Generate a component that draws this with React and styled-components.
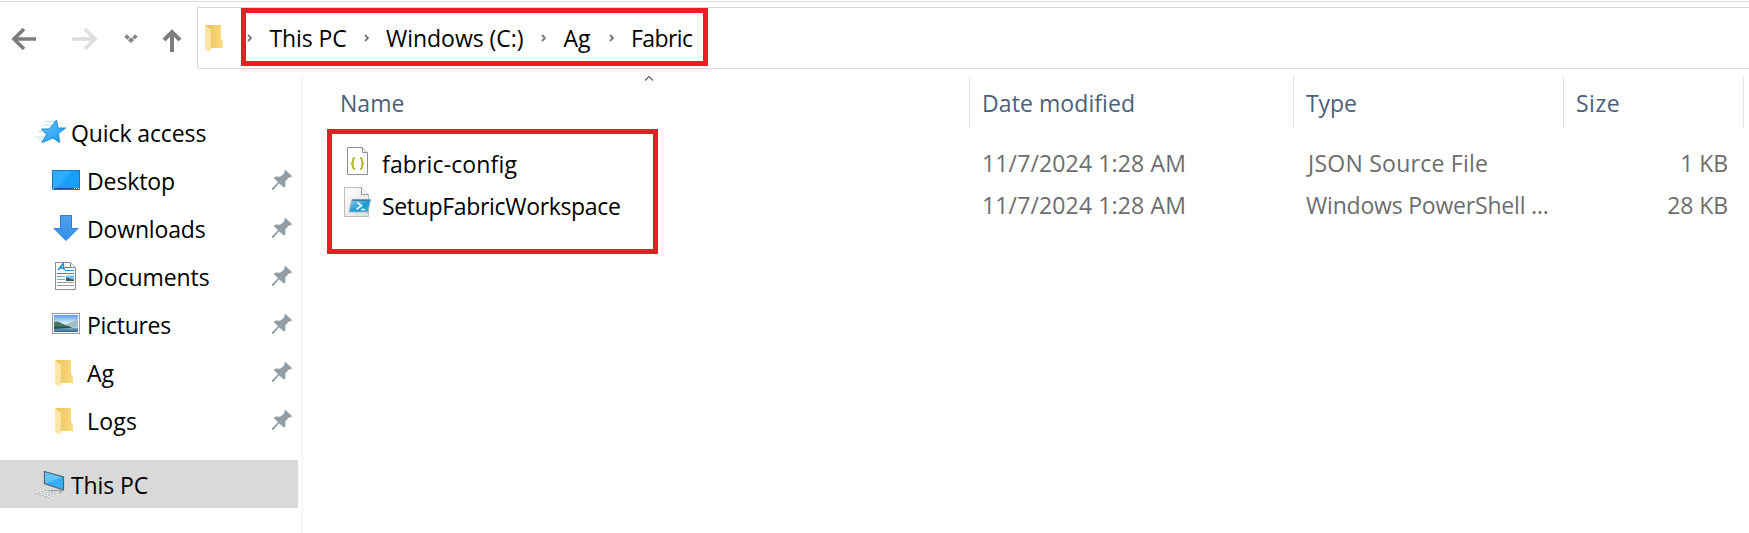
import React from "react";
import styled, { createGlobalStyle, css } from "styled-components";

const GlobalStyle = createGlobalStyle`
  *, *::before, *::after { box-sizing: border-box; }
  body {
    margin: 0;
    background: #fff;
    color: #000;
    font-family: "Open Sans", "Noto Sans", sans-serif;
    font-size: 23px;
    line-height: 30px;
    overflow: hidden;
  }
  svg { display: block; }
`;

const Window = styled.div`
  display: flex;
  flex-direction: column;
  width: 1749px;
  height: 533px;
  overflow: hidden;
  background: #fff;
`;

const NavigationBar = styled.header`
  display: flex;
  flex: none;
  height: 69px;
  margin-top: 1px;
  border-top: 1px solid #dcdcdc;
`;

const NavButtons = styled.nav`
  display: flex;
  width: 197px;
  height: 67px;
`;

const NavButton = styled.button`
  flex: none;
  width: ${(p) => p.$width}px;
  height: 67px;
  padding: 0;
  border: 0;
  background: none;
`;

const AddressBar = styled.div`
  display: flex;
  flex: 1;
  height: 62px;
  margin-top: 5px;
  border: 1px solid #d9d9d9;
  border-right: 0;
`;

const AddressIcon = styled.div`
  width: 43px;
  padding: 14px 0 0 5px;
`;

const Breadcrumbs = styled.div`
  display: flex;
  align-items: center;
  width: 467px;
  height: 58px;
  padding: 2px 0 0 1px;
  border: 5px solid #ed1c24;
`;

const Crumb = styled.div`
  display: flex;
  align-items: center;
  width: ${(p) => p.$width}px;
`;

const Text = styled.span`
  white-space: nowrap;
  letter-spacing: ${(p) => p.$track || 0}px;
`;

const CrumbText = styled(Text)`
  padding-left: ${(p) => p.$indent}px;
`;

const Body = styled.div`
  display: flex;
  flex: 1;
  min-height: 0;
`;

const Sidebar = styled.aside`
  width: 303px;
  margin-top: 6px;
  padding-top: 32px;
  border-right: 2px solid #f7f7f7;
`;

const SidebarItem = styled.div`
  display: flex;
  align-items: center;
  width: 298px;
  height: 48px;
  padding-left: 34px;
  ${(p) => p.$child && css`padding-left: 50px;`}
  ${(p) => p.$selected && css`
    margin-top: 16px;
    background: #d9d9d9;
  `}
`;

const SidebarIcon = styled.div`
  flex: none;
  ${(p) => p.$folder && css`
    width: 31px;
    padding: 4px 0 0 3px;
  `}
`;

const SidebarText = styled(Text)`
  flex: 1;
  padding: 2px 0 0 5px;
  ${(p) => p.$child && css`padding-left: 6px;`}
`;

const PinSlot = styled.div`
  width: 27px;
`;

const FileList = styled.main`
  flex: 1;
  padding-top: 6px;
`;

const columns = css`
  display: grid;
  grid-template-columns: 667px 324px 270px 180px;
`;

const HeaderRow = styled.div`
  ${columns}
  height: 52px;
  color: #4c607a;
`;

const HeaderCell = styled.div`
  position: relative;
  padding: 12px 0 0 12px;
  border-right: 1px solid #e5e5e5;
  ${(p) => p.$first && css`padding-left: 37px;`}
`;

const SortMark = styled.div`
  position: absolute;
  top: -1px;
  left: 341px;
`;

const FileTable = styled.div`
  ${columns}
  margin-top: 1px;
`;

const HighlightedNames = styled.div`
  width: 331px;
  height: 125px;
  margin-left: 24px;
  padding-top: 7px;
  border: 5px solid #ed1c24;
`;

const FileName = styled.div`
  display: flex;
  align-items: center;
  height: 42px;
  padding-left: 11px;
`;

const FileText = styled(Text)`
  padding: 3px 0 0 8px;
`;

const DetailColumn = styled.div`
  padding: 12px 0 0 12px;
  color: #6d6d6d;
  ${(p) => p.$right && css`
    padding-right: 16px;
    text-align: right;
  `}
`;

const Detail = styled.div`
  height: 42px;
  padding-top: 7px;
  padding-left: ${(p) => p.$indent || 0}px;
`;

const FolderIcon = ({ id }) => (
  <svg width="31" height="34" viewBox="0 0 31 34">
    <defs>
      <linearGradient id={id} x1="0" y1="0" x2="1" y2="0">
        <stop offset="0" stopColor="#e9bf58" />
        <stop offset="1" stopColor="#fcdd83" />
      </linearGradient>
    </defs>
    <path d="M2 3h16v14l2 2v7H5z" fill={`url(#${id})`} />
    <path d="M2 3l6 5v19l-1 3-5-3z" fill="#ffe5a3" />
    <path d="M8 9v17" stroke="#f3d381" strokeWidth=".7" />
  </svg>
);

const BackIcon = () => (
  <svg width="54" height="67">
    <path d="M36 37H14M24 27L14 37l10 10" fill="none" stroke="#7d7d7d" strokeWidth="3.7" />
  </svg>
);

const ForwardIcon = () => (
  <svg width="64" height="67">
    <path d="M18 37h22M31 27l10 10-10 10" fill="none" stroke="#dedede" strokeWidth="3.5" />
  </svg>
);

const RecentIcon = () => (
  <svg width="30" height="67">
    <path d="M7.5 33.5l5.500 5 5.500-5" fill="none" stroke="#858585" strokeWidth="3.6" strokeDasharray="4.200 .8 5 .8 4.200" />
  </svg>
);

const UpIcon = () => (
  <svg width="49" height="67">
    <path d="M24 50V30M16 38l8-8 8 8" fill="none" stroke="#7d7d7d" strokeWidth="4" />
  </svg>
);

const CrumbArrow = () => (
  <svg width="6" height="10" viewBox="0 0 6 10">
    <path d="M1 2l3 3-3 3" fill="none" stroke="#777" strokeWidth="1.8" />
  </svg>
);

const StarIcon = () => (
  <svg width="32" height="34" viewBox="0 0 32 34">
    <defs>
      <linearGradient id="star" x1="0" y1="0" x2="1" y2="1">
        <stop offset="0" stopColor="#6cc8ff" />
        <stop offset="1" stopColor="#1295ee" />
      </linearGradient>
    </defs>
    <path d="M11 6.500h10M9 10h9M4 16.500h9M2 22h8M5 25h4" stroke="#b5dbf4" strokeWidth=".9" />
    <path d="M22.500 5l1.500 8h7.500l-7 5.500 1 9-6.500-4.500-11 4.500 4.500-8-5-5.500h8z" fill="url(#star)" stroke="#188bd3" strokeWidth="1" />
  </svg>
);

const DesktopIcon = () => (
  <svg width="31" height="34" viewBox="0 0 31 34">
    <rect x="2.500" y="7.500" width="27" height="19" fill="#16a0fb" stroke="#1479bd" />
    <path d="M3 8h19L7 25H3z" fill="#38b0ff" opacity=".75" />
    <path d="M3 25.500h26" stroke="#075a91" strokeWidth="1.200" />
    <path d="M3 25.500h1M24 25.500h1M26 25.500h1M28 25.500h1" stroke="#fff" />
  </svg>
);

const DownloadIcon = () => (
  <svg width="31" height="34" viewBox="0 0 31 34">
    <defs>
      <linearGradient id="down" x1="0" y1="0" x2="0" y2="1">
        <stop offset="0" stopColor="#50a0e9" />
        <stop offset="1" stopColor="#3090ed" />
      </linearGradient>
    </defs>
    <path d="M10.500 4.500h11v13h6.500L16 29.500 4 17.500h6.500z" fill="url(#down)" stroke="#2b7ece" />
  </svg>
);

const DocumentIcon = () => (
  <svg width="31" height="34" viewBox="0 0 31 34">
    <path d="M5.500 3.500h15l5 5v22h-20z" fill="#fff" stroke="#8d8d8d" />
    <path d="M20.500 3.500v5h5" fill="#eee" stroke="#8d8d8d" />
    <path d="M8 11l5.200-6.500 1 6.500M10 9h4" fill="none" stroke="#168bd4" strokeWidth="1.500" />
    <path d="M15 8.500h5M15 11.500h9M7 14.500h17" stroke="#2c91c9" />
    <path d="M7 17.500h8M7 20.500h8M7 23.500h17M7 26.500h17" stroke="#9b9b9b" />
    <rect x="16" y="16.500" width="8" height="5.500" fill="#83bbef" />
    <path d="M16 18.500c3 0 4 2 8 2V22h-8z" fill="#345b66" />
  </svg>
);

const PictureIcon = () => (
  <svg width="31" height="34" viewBox="0 0 31 34">
    <defs>
      <linearGradient id="sky" x1="0" y1="0" x2="0" y2="1">
        <stop offset="0" stopColor="#5b9bf0" />
        <stop offset=".5" stopColor="#dcefff" />
      </linearGradient>
      <linearGradient id="lake" x1="0" y1="0" x2="0" y2="1">
        <stop offset="0" stopColor="#7fb0cc" />
        <stop offset="1" stopColor="#2d6592" />
      </linearGradient>
    </defs>
    <rect x="2.500" y="6.500" width="27" height="20" fill="#fff" stroke="#9a9a9a" />
    <rect x="4" y="8" width="24" height="17" fill="url(#sky)" />
    <path d="M15 18l6-3 7-2v7H15z" fill="#a3bfc4" />
    <path d="M4 15c3-1 5 0 8 1.500l6 2.500 5 1.500H4z" fill="#4b795c" />
    <path d="M4 20.500h24V25H4z" fill="url(#lake)" />
    <path d="M4 19.500h15l3 1.200-18 1.300z" fill="#24515a" />
  </svg>
);

const ComputerIcon = () => (
  <svg width="32" height="34" viewBox="0 0 32 34">
    <path d="M10.500 4.500l19 5.500v13l-19-6.500z" fill="#35b0fb" stroke="#50616c" strokeWidth="1.200" />
    <path d="M11 5.200l17 5L13 16l-2-.8z" fill="#74ceff" opacity=".7" />
    <path d="M15 24c3-2 5 1 9-1l4 1-3 2" fill="none" stroke="#9aa1a6" strokeWidth="1.100" />
    <path d="M0 25.500l9-3 16 4.500-8 4z" fill="#e8eaec" />
    <path d="M1 26l15 5M4 25l15 4.500M7 24l15 4M10 23l14 4" stroke="#a3aaae" strokeWidth=".9" strokeDasharray="2.500 1" />
  </svg>
);

const PinIcon = () => (
  <svg width="22" height="22" viewBox="0 0 22 22">
    <path d="M14.500 1l6.500 6-1.300 1.600-2-.2-3.500 4.100.3 4.500-1.500 1.700-5-4.500-5.500 6.500L1 21v-1.800l6-6L2.800 9l1.700-1.500 4.700.2L13.500 4l-.4-1.700z" fill="#929da4" />
  </svg>
);

const JsonIcon = () => (
  <svg width="31" height="34" viewBox="0 0 31 34">
    <path d="M4.500 2.500h15l5 5v22h-20z" fill="#fdfdfd" stroke="#8f8f8f" />
    <path d="M19.500 2.500v5h5" fill="#eee" stroke="#8f8f8f" />
    <path d="M12 13c-2 0-2 1-2 3s-.5 2.500-2 2.500c1.500 0 2 .5 2 2.500s0 3 2 3M17 13c2 0 2 1 2 3s.5 2.500 2 2.500c-1.500 0-2 .5-2 2.500s0 3-2 3" fill="none" stroke="#b5ba2b" strokeWidth="1.900" />
  </svg>
);

const ScriptIcon = () => (
  <svg width="31" height="36" viewBox="0 0 31 36">
    <defs>
      <linearGradient id="page" x1="0" y1="0" x2="1" y2="1">
        <stop offset="0" stopColor="#fff" />
        <stop offset="1" stopColor="#dedede" />
      </linearGradient>
      <linearGradient id="console" x1="0" y1="0" x2="1" y2="1">
        <stop offset="0" stopColor="#91d0f0" />
        <stop offset=".6" stopColor="#1799d7" />
        <stop offset="1" stopColor="#52abc9" />
      </linearGradient>
    </defs>
    <path d="M1.500 1.500h17l7 7v22h-24z" fill="url(#page)" stroke="#bbb" />
    <path d="M18.500 1.500v7h7" fill="#f5f5f5" stroke="#999" />
    <path d="M9 13.500h18.500l-2.500 12.500H6z" fill="url(#console)" stroke="#93b6c6" />
    <path d="M9.500 13.500h18l-.4 1.500H9z" fill="#477e99" />
    <path d="M14.500 16.500l4 3.300-5 3.500M18 23.500h4" fill="none" stroke="#fff" strokeWidth="1.700" />
  </svg>
);

const SortIcon = () => (
  <svg width="10" height="7" viewBox="0 0 10 7">
    <path d="M1 5.500l4-4 4 4" fill="none" stroke="#5a5a5a" strokeWidth="1.100" />
  </svg>
);

const crumbs = [
  { label: "This PC", width: 117, indent: 16.5, track: -0.1 },
  { label: "Windows (C:)", width: 177, indent: 16, track: -0.03 },
  { label: "Ag", width: 68, indent: 16.5, track: 0 },
  { label: "Fabric", width: 94, indent: 16, track: -0.6 },
];

const places = [
  { label: "Quick access", Icon: StarIcon, track: -0.1 },
  { label: "Desktop", Icon: DesktopIcon, child: true, track: -0.1 },
  { label: "Downloads", Icon: DownloadIcon, child: true, track: -0.15 },
  { label: "Documents", Icon: DocumentIcon, child: true, track: -0.05 },
  { label: "Pictures", Icon: PictureIcon, child: true, track: -0.3 },
  { label: "Ag", Icon: FolderIcon, folder: true, child: true, track: 0 },
  { label: "Logs", Icon: FolderIcon, folder: true, child: true, track: 0.2 },
  { label: "This PC", Icon: ComputerIcon, selected: true, track: -0.1 },
];

export default function App() {
  return (
    <>
      <GlobalStyle />
      <Window>
        <NavigationBar>
          <NavButtons>
            <NavButton $width={54} aria-label="Back"><BackIcon /></NavButton>
            <NavButton $width={64} aria-label="Forward"><ForwardIcon /></NavButton>
            <NavButton $width={30} aria-label="Recent locations"><RecentIcon /></NavButton>
            <NavButton $width={49} aria-label="Up"><UpIcon /></NavButton>
          </NavButtons>
          <AddressBar>
            <AddressIcon><FolderIcon id="folder-address" /></AddressIcon>
            <Breadcrumbs>
              {crumbs.map((c) => (
                <Crumb key={c.label} $width={c.width}>
                  <CrumbArrow />
                  <CrumbText $indent={c.indent} $track={c.track}>{c.label}</CrumbText>
                </Crumb>
              ))}
            </Breadcrumbs>
          </AddressBar>
        </NavigationBar>
        <Body>
          <Sidebar>
            {places.map(({ label, Icon, child, folder, selected, track }) => (
              <SidebarItem key={label} $child={child} $selected={selected}>
                <SidebarIcon $folder={folder}><Icon id={`folder-${label}`} /></SidebarIcon>
                <SidebarText $track={track} $child={child}>{label}</SidebarText>
                {child && <PinSlot><PinIcon /></PinSlot>}
              </SidebarItem>
            ))}
          </Sidebar>
          <FileList>
            <HeaderRow>
              <HeaderCell $first>
                <Text $track={0.04}>Name</Text>
                <SortMark><SortIcon /></SortMark>
              </HeaderCell>
              <HeaderCell><Text $track={0.08}>Date modified</Text></HeaderCell>
              <HeaderCell><Text $track={-0.09}>Type</Text></HeaderCell>
              <HeaderCell><Text $track={0.5}>Size</Text></HeaderCell>
            </HeaderRow>
            <FileTable>
              <HighlightedNames>
                <FileName><JsonIcon /><FileText $track={0.14}>fabric-config</FileText></FileName>
                <FileName><ScriptIcon /><FileText $track={-0.33}>SetupFabricWorkspace</FileText></FileName>
              </HighlightedNames>
              <DetailColumn>
                <Detail><Text $track={0.14}>11/7/2024 1:28 AM</Text></Detail>
                <Detail><Text $track={0.14}>11/7/2024 1:28 AM</Text></Detail>
              </DetailColumn>
              <DetailColumn>
                <Detail $indent={2}><Text $track={0.25}>JSON Source File</Text></Detail>
                <Detail><Text $track={-0.2}>Windows PowerShell ...</Text></Detail>
              </DetailColumn>
              <DetailColumn $right>
                <Detail><Text $track={-0.07}>1 KB</Text></Detail>
                <Detail><Text $track={-0.09}>28 KB</Text></Detail>
              </DetailColumn>
            </FileTable>
          </FileList>
        </Body>
      </Window>
    </>
  );
}
